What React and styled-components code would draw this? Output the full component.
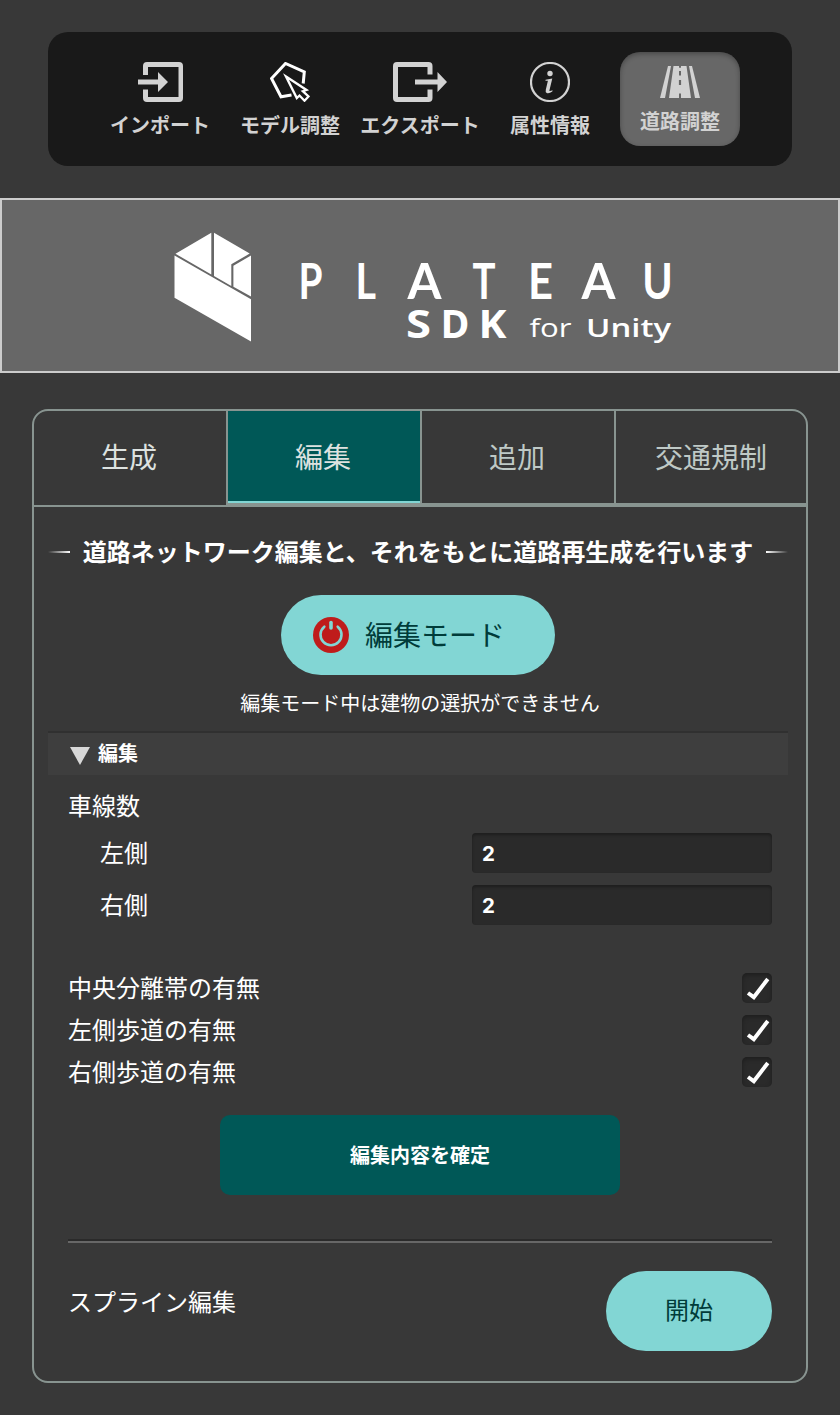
import React from "react";
import styled, { createGlobalStyle, css } from "styled-components";

const GlobalStyle = createGlobalStyle`
  * { box-sizing: border-box; }
  body {
    margin: 0;
    background: #383838;
    color: #fff;
    font-family: "Noto Sans CJK JP", sans-serif;
  }
  button { font-family: inherit; border: 0; padding: 0; margin: 0; }
`;

const Page = styled.main`
  width: 840px;
  height: 1415px;
  padding-top: 32px;
  background: #383838;
`;

const Toolbar = styled.nav`
  display: flex;
  justify-content: center;
  gap: 10px;
  height: 134px;
  margin: 0 48px;
  padding: 20px 0;
  border-radius: 20px;
  background: #191919;
`;

const ToolButton = styled.button`
  display: flex;
  flex-direction: column;
  align-items: center;
  width: 120px;
  height: 94px;
  padding-top: 10px;
  border-radius: 20px;
  background: transparent;
  color: #d2d2d2;
  ${(p) =>
    p.$active &&
    css`
      padding-top: 14px;
      background: #676767;
      box-shadow: inset 0 2px 5px rgba(0, 0, 0, 0.3);
    `}
`;

const ToolLabel = styled.span`
  margin-top: 8px;
  font-size: 20px;
  font-weight: 700;
  line-height: 30px;
  white-space: nowrap;
`;

const Banner = styled.header`
  height: 175px;
  margin-top: 32px;
  border: 2px solid #cccccc;
  background: #676767;
  svg { display: block; }
`;

const Panel = styled.section`
  height: 974px;
  margin: 36px 32px 0;
  border: 2px solid #889490;
  border-radius: 16px;
  overflow: hidden;
`;

const Tabs = styled.div`
  display: grid;
  grid-template-columns: 194px 194px 194px 190px;
  height: 96px;
  border-bottom: 2px solid #889490;
`;

const Tab = styled.button`
  height: 94px;
  padding-bottom: ${(p) => (p.$raised ? 3 : 5)}px;
  padding-right: ${(p) => (p.$last ? 0 : 2)}px;
  border-right: ${(p) => (p.$last ? 0 : 2)}px solid #889490;
  border-bottom: ${(p) => (p.$raised ? 2 : 0)}px solid #889490;
  background: ${(p) => (p.$selected ? "#005857" : "transparent")};
  box-shadow: ${(p) => (p.$selected ? "inset 0 -2px 0 #82d6d4" : "none")};
  color: ${(p) => p.$color};
  font-size: 28px;
  line-height: 40px;
`;

const Heading = styled.h1`
  display: flex;
  align-items: center;
  justify-content: center;
  gap: 13px;
  width: 740px;
  height: 36px;
  margin: 26px 0 0 14px;
  font-size: 24px;
  font-weight: 700;
  line-height: 36px;
  white-space: nowrap;
`;

const HeadingRule = styled.i`
  flex: none;
  width: 22px;
  height: 2px;
  margin-top: 2px;
  background: linear-gradient(to ${(p) => p.$to}, transparent, #ffffff);
`;

const ModeButton = styled.button`
  display: flex;
  align-items: center;
  gap: 16px;
  width: 274px;
  height: 80px;
  margin: 26px 0 0 247px;
  padding: 0 0 0 31px;
  border-radius: 40px;
  background: #82d6d4;
  color: #003c3a;
  font-size: 28px;
  line-height: 40px;
  span { margin: 0 0 3px -1px; }
`;

const Note = styled.p`
  margin: 13px 0 0;
  font-size: 20px;
  line-height: 30px;
  text-align: center;
`;

const SectionBar = styled.div`
  display: flex;
  align-items: center;
  gap: 8px;
  width: 740px;
  height: 44px;
  margin: 13px 0 0 14px;
  padding-left: 22px;
  border-top: 2px solid #303030;
  background: #3e3e3e;
  font-size: 20px;
  font-weight: 700;
  line-height: 30px;
  span { margin-bottom: 2px; }
  svg { margin-top: 3px; }
`;

const Content = styled.div`
  padding: 13px 34px 0;
  font-size: 24px;
`;

const GroupLabel = styled.div`
  height: 36px;
  line-height: 34px;
`;

const FieldRow = styled.label`
  display: flex;
  justify-content: space-between;
  height: 40px;
  margin-top: ${(p) => p.$gap}px;
  padding-left: 32px;
  line-height: 38px;
`;

const NumberField = styled.span`
  width: 300px;
  height: 40px;
  padding: 0 10px;
  border-radius: 4px;
  background: #2a2a2a;
  box-shadow: inset 0 2px 3px rgba(0, 0, 0, 0.3);
  font-family: Inter, sans-serif;
  font-size: 20.500px;
  font-weight: 700;
  line-height: 42px;
`;

const Checks = styled.div`
  display: grid;
  gap: 12px;
  margin-top: 48px;
`;

const CheckRow = styled.label`
  display: flex;
  justify-content: space-between;
  height: 30px;
  line-height: 28px;
`;

const CheckBox = styled.span`
  width: 30px;
  height: 30px;
  border-radius: 5px;
  background: #2a2a2a;
  box-shadow: inset 0 2px 5px rgba(0, 0, 0, 0.3);
  svg { display: block; }
`;

const ConfirmButton = styled.button`
  display: block;
  width: 400px;
  height: 80px;
  margin: 28px auto 0;
  padding-bottom: 1px;
  border-radius: 10px;
  background: #005857;
  color: #fff;
  font-size: 20px;
  font-weight: 700;
`;

const Divider = styled.hr`
  height: 4px;
  margin: 44px 0 28px;
  border: 0;
  border-top: 2px solid #2a2a2a;
  background: #676767;
`;

const SplineRow = styled.div`
  display: flex;
  justify-content: space-between;
  height: 80px;
  line-height: 60px;
`;

const StartButton = styled.button`
  width: 166px;
  height: 80px;
  padding-bottom: 5px;
  border-radius: 40px;
  background: #82d6d4;
  color: #003c3a;
  font-size: 24px;
`;

const ImportIcon = () => (
  <svg width="45" height="40" viewBox="0 0 45 40" fill="#d2d2d2">
    <path d="M5 13V4Q5 0 9 0H41Q45 0 45 4V36Q45 40 41 40H9Q5 40 5 36V27.500H10V35H40.500V5H10V13Z" />
    <path d="M0 17.500H20V10L30 20L20 30V22.500H0Z" />
  </svg>
);

const ExportIcon = () => (
  <svg width="54" height="40" viewBox="0 0 54 40" fill="#d2d2d2">
    <path d="M39.500 12.500V4Q39.500 0 35.500 0H4Q0 0 0 4V36Q0 40 4 40H35.500Q39.500 40 39.500 36V27.500H34.500V35H5V5H34.500V12.500Z" />
    <path d="M22 17.500H44.500V10L54 20L44.500 30V22.500H22Z" />
  </svg>
);

const ModelIcon = () => (
  <svg width="40" height="40" viewBox="0 0 40 40" fill="none" stroke="#fff">
    <path d="M21.500 33L11 34.800L1.500 16.500L15.500 1.500L34.300 10L33.200 21.500" strokeWidth="3" />
    <path d="M16 14.500L36.500 28L32.800 29.200L38.500 34.500L34.500 38.700L29.500 33.500L26.800 36Z" strokeWidth="2.300" />
  </svg>
);

const InfoIcon = () => (
  <svg width="40" height="40" viewBox="0 0 40 40">
    <circle cx="20" cy="20" r="19" fill="none" stroke="#d2d2d2" strokeWidth="2.200" />
    <circle cx="20" cy="11.500" r="2.700" fill="#d2d2d2" />
    <path d="M15.600 17.700L22.300 16.400L19.400 28.400Q19.200 29.700 22.600 28.200L22.300 29.600Q19 31.900 16.700 31Q15.200 30.300 15.800 27.800L17.900 18.800L15.400 18.700Z" fill="#d2d2d2" />
  </svg>
);

const RoadIcon = () => (
  <svg width="40" height="32" viewBox="0 0 40 32" fill="#d2d2d2">
    <path d="M8 0H11L5 32H0ZM29 0H32L40 32H35Z" />
    <path fillRule="evenodd" d="M13.500 0H19V1.800H21V0H26.500L31 32H21V27.500H19V32H9ZM19 5V9.500H21V5ZM18.900 14V19H21.100V14Z" />
  </svg>
);

const PowerIcon = () => (
  <svg width="38" height="38" viewBox="0 0 38 38">
    <circle cx="19" cy="19" r="18" fill="#bf1c1b" />
    <path d="M12.300 10.700A10.500 10.500 0 1 0 25.700 10.700" fill="none" stroke="#82d6d4" strokeWidth="2.600" strokeLinecap="round" />
    <path d="M19 6.500V12" stroke="#82d6d4" strokeWidth="3.600" strokeLinecap="round" />
  </svg>
);

const Logo = () => (
  <svg width="836" height="171" viewBox="2 200 836 171" fill="#fff">
    <path d="M174.500 255.500L251 299.200V341.500L174.500 297.800ZM211.300 232.800V274.500L175.500 253.800ZM214 232.800L249.700 253.600L231.300 264.200V286L214 276ZM251 255.400V296.600L233.400 286.800V265.700Z" />
    <g fontFamily="Lato" fontWeight="700" fontSize="49.500">
      {[["P", 298.5, 24], ["L", 355.5, 20.5], ["A", 407.5, 34], ["T", 472.5, 23], ["E", 528, 25], ["A", 581.5, 34], ["U", 642.3, 30.5]].map(([c, x, w], i) => (
        <text key={i} x={x} y="299" textLength={w} lengthAdjust="spacingAndGlyphs">{c}</text>
      ))}
    </g>
    <g fontFamily="Open Sans" fontWeight="700" fontSize="39">
      <text x="406" y="338" textLength="25" lengthAdjust="spacingAndGlyphs">S</text>
      <text x="440.500" y="338" textLength="29" lengthAdjust="spacingAndGlyphs">D</text>
      <text x="478.500" y="338" textLength="28" lengthAdjust="spacingAndGlyphs">K</text>
    </g>
    <g fontFamily="Open Sans" fontSize="26">
      <text x="529.500" y="337" textLength="42" lengthAdjust="spacingAndGlyphs">for</text>
      <text x="586" y="337" fontWeight="600" textLength="85" lengthAdjust="spacingAndGlyphs">Unity</text>
    </g>
  </svg>
);

const tools = [
  { label: "インポート", Icon: ImportIcon },
  { label: "モデル調整", Icon: ModelIcon },
  { label: "エクスポート", Icon: ExportIcon },
  { label: "属性情報", Icon: InfoIcon },
  { label: "道路調整", Icon: RoadIcon, active: true },
];

const lanes = [
  { label: "左側", value: 2, gap: 9 },
  { label: "右側", value: 2, gap: 12 },
];

const checks = ["中央分離帯の有無", "左側歩道の有無", "右側歩道の有無"];

export default function App() {
  return (
    <>
      <GlobalStyle />
      <Page lang="ja">
        <Toolbar>
          {tools.map(({ label, Icon, active }) => (
            <ToolButton key={label} $active={active}>
              <Icon />
              <ToolLabel>{label}</ToolLabel>
            </ToolButton>
          ))}
        </Toolbar>
        <Banner><Logo /></Banner>
        <Panel>
          <Tabs>
            <Tab $color="#dde2e0">生成</Tab>
            <Tab $color="#dde2e0" $raised $selected>編集</Tab>
            <Tab $color="#bfc9c6" $raised>追加</Tab>
            <Tab $color="#bfc9c6" $raised $last>交通規制</Tab>
          </Tabs>
          <Heading>
            <HeadingRule $to="right" />
            道路ネットワーク編集と、それをもとに道路再生成を行います
            <HeadingRule $to="left" />
          </Heading>
          <ModeButton><PowerIcon /><span>編集モード</span></ModeButton>
          <Note>編集モード中は建物の選択ができません</Note>
          <SectionBar>
            <svg width="20" height="18" viewBox="0 0 20 18"><path d="M0 0H20L10 18Z" fill="#d8d8d8" /></svg>
            <span>編集</span>
          </SectionBar>
          <Content>
            <GroupLabel>車線数</GroupLabel>
            {lanes.map(({ label, value, gap }) => (
              <FieldRow key={label} $gap={gap}>
                {label}
                <NumberField>{value}</NumberField>
              </FieldRow>
            ))}
            <Checks>
              {checks.map((label) => (
                <CheckRow key={label}>
                  {label}
                  <CheckBox>
                    <svg width="30" height="30" viewBox="0 0 30 30">
                      <path d="M6 20L11.800 24.200L25.800 6" fill="none" stroke="#fff" strokeWidth="3.900" />
                    </svg>
                  </CheckBox>
                </CheckRow>
              ))}
            </Checks>
            <ConfirmButton>編集内容を確定</ConfirmButton>
            <Divider />
            <SplineRow>
              スプライン編集
              <StartButton>開始</StartButton>
            </SplineRow>
          </Content>
        </Panel>
      </Page>
    </>
  );
}
